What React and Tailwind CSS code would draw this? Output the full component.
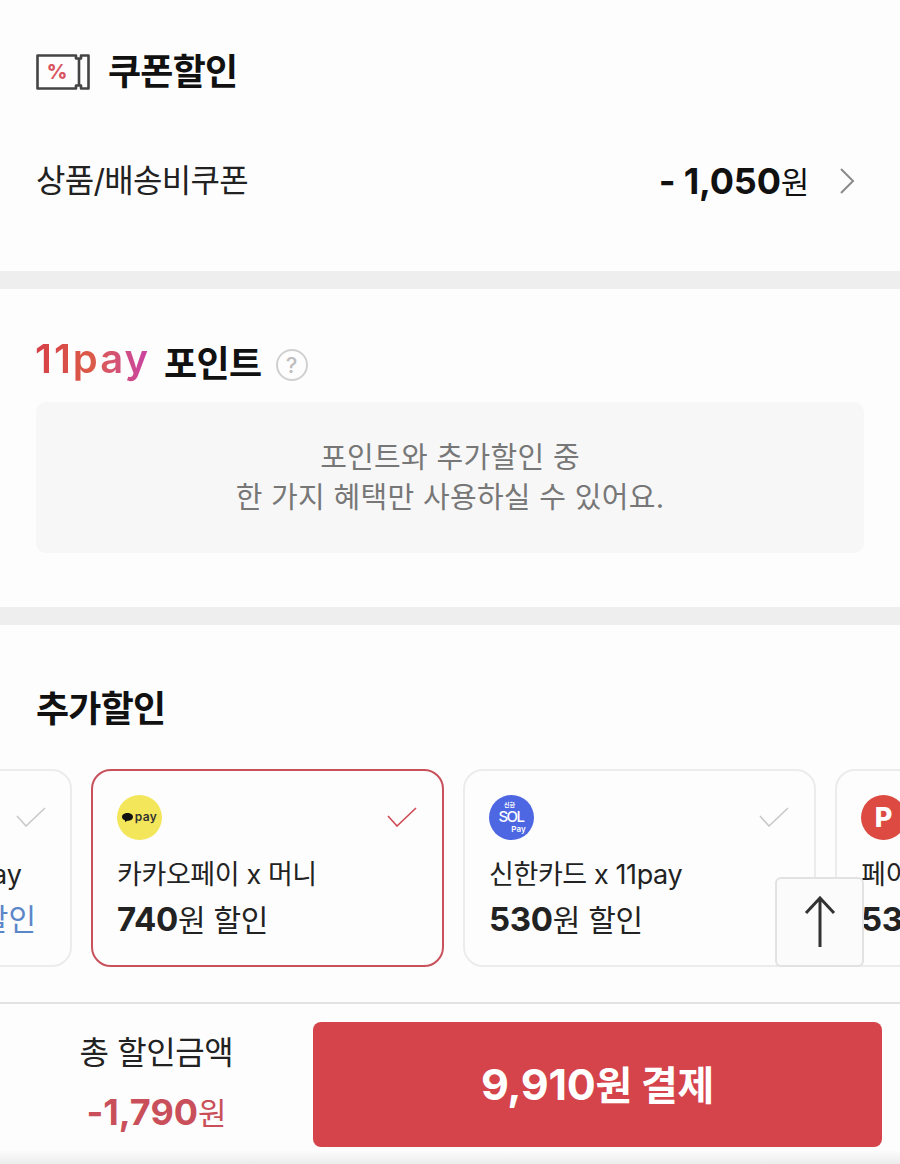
import React from 'react';

const FONT = 'font-["Inter","Noto_Sans_CJK_KR",sans-serif]';

const Check = ({ color }) => (
  <svg width="30" height="20" viewBox="0 0 30 20" fill="none" className="shrink-0">
    <path d="M1 9 L10 19 L29 1" stroke={color} strokeWidth="1.6" />
  </svg>
);

const CouponIcon = () => (
  <svg width="54" height="36" viewBox="0 0 54 36" fill="none" className="shrink-0">
    <path
      d="M1.500 1.500 H40 V4.500 H43 V31.500 H40 V34.500 H1.500 Z M43 4.500 H45 V1.500 H52.500 V34.500 H45 V31.500 H43"
      stroke="#444444"
      strokeWidth="2.600"
      strokeLinejoin="round"
    />
    <text x="21" y="25" textAnchor="middle" fontSize="20" fontWeight="800" fill="#d8555f" fontFamily="Inter, sans-serif">%</text>
  </svg>
);

const KakaoLogo = () => (
  <div className="w-[45px] h-[45px] rounded-full bg-[#f3e65a] flex items-center justify-center gap-[2px] shrink-0">
    <svg width="11" height="9" viewBox="0 0 11 9"><path d="M5.5 0C8.5 0 11 1.7 11 3.9S8.5 7.7 5.5 7.7L3 9V7.2C1.200 6.500 0 5.300 0 3.900 0 1.700 2.500 0 5.500 0Z" fill="#111" /></svg>
    <span className="text-[12px] leading-none font-semibold tracking-[0.3px] text-[#333] pb-[1px]">pay</span>
  </div>
);

const SolLogo = () => (
  <div className="w-[45px] h-[45px] rounded-full bg-[#4d67e3] flex flex-col items-center justify-center text-white shrink-0 leading-none">
    <span className="text-[6px] font-bold mb-[1px] mr-[4px]">신한</span>
    <span className="text-[15px] font-medium tracking-[-1.500px] mr-[1px]">SOL</span>
    <span className="text-[8px] font-semibold ml-[14px] mt-[1px]">Pay</span>
  </div>
);

const PointLogo = () => (
  <div className="w-[45px] h-[45px] rounded-full bg-[#dc4a42] flex items-center justify-center text-white text-[27px] font-extrabold shrink-0 leading-none">
    P
  </div>
);

const DiscountCard = ({ logo, name, amount, selected }) => (
  <div className={`w-[353px] h-[198px] shrink-0 rounded-[20px] border-2 pl-[24px] pr-[25px] pt-[24px] ${selected ? 'border-[#c9515c]' : 'border-[#ececec]'}`}>
    <div className="flex items-start justify-between h-[45px]">
      {logo}
      <div className="pt-[12px]">
        <Check color={selected ? '#cf4a55' : '#c9c9c9'} />
      </div>
    </div>
    <div className="mt-[13px] text-[27px] leading-[44px] tracking-[-0.4px] text-[#222]">{name}</div>
    <div className="text-[30px] leading-[45px] text-[#222] tracking-[-0.3px]">
      <span className="font-bold text-[33px]">{amount}</span>원 할인
    </div>
  </div>
);

export default function App() {
  return (
    <div className={`w-[900px] h-[1164px] overflow-hidden bg-[#fdfdfd] ${FONT}`}>
      {/* 쿠폰할인 */}
      <section className="h-[271px] px-[36px] pt-[47px]">
        <div className="flex items-center gap-[18px] h-[50px]">
          <CouponIcon />
          <h2 className="text-[36px] leading-[50px] font-bold text-[#111] tracking-[-0.8px]">쿠폰할인</h2>
        </div>
        <div className="flex items-center justify-between h-[50px] mt-[59px]">
          <span className="text-[32px] text-[#222] tracking-[-0.7px]">상품/배송비쿠폰</span>
          <div className="flex items-center">
            <span className="text-[31px] text-[#111] tracking-[-0.3px]">
              <span className="font-bold text-[36px] tracking-[-0.2px]">- 1,050</span>원
            </span>
            <svg width="16" height="26" viewBox="0 0 16 26" fill="none" className="ml-[30px] mr-[9px]">
              <path d="M2 1 L14 13 L2 25" stroke="#8a8a8a" strokeWidth="2" />
            </svg>
          </div>
        </div>
      </section>

      <div className="h-[18px] bg-[#eeeeee]" />

      {/* 11pay 포인트 */}
      <section className="h-[318px] px-[36px] pt-[48px]">
        <div className="flex items-center h-[54px] -ml-[1px]">
          <span className="pb-[10px] text-[40px] leading-[54px] font-semibold tracking-[2px] bg-gradient-to-r from-[#d63f48] via-[#dc5a48] to-[#c93fa5] bg-clip-text text-transparent">11pay</span>
          <span className="ml-[14px] text-[36px] leading-[54px] font-bold text-[#111] tracking-[-0.6px]">포인트</span>
          <span className="ml-[14px] mt-[2px] w-[32px] h-[32px] rounded-full border-2 border-[#d0d0d0] flex items-center justify-center text-[22px] font-medium text-[#bdbdbd]">?</span>
        </div>
        <div className="mt-[11px] h-[151px] rounded-[10px] bg-[#f7f7f7] flex flex-col items-center justify-center text-[29px] leading-[40px] text-[#777777] tracking-[0.3px]">
          <p>포인트와 추가할인 중</p>
          <p>한 가지 혜택만 사용하실 수 있어요.</p>
        </div>
      </section>

      <div className="h-[18px] bg-[#eeeeee]" />

      {/* 추가할인 */}
      <section className="relative h-[377px] pt-[60px]">
        <h2 className="px-[36px] text-[36px] leading-[48px] font-bold text-[#111] tracking-[-0.8px]">추가할인</h2>
        <div className="mt-[36px] overflow-hidden">
          <div className="flex gap-[19px] -ml-[281px]">
            <div className="w-[353px] h-[198px] shrink-0 rounded-[20px] border-2 border-[#ececec] pt-[24px]">
              <div className="flex justify-end pr-[24px] h-[45px] pt-[12px]">
                <Check color="#c9c9c9" />
              </div>
              <div className="mt-[13px] text-right pr-[48px] text-[27px] leading-[44px] text-[#222]">11pay</div>
              <div className="text-right pr-[34px] text-[30px] leading-[45px] text-[#5b86c8]">할인</div>
            </div>
            <DiscountCard logo={<KakaoLogo />} name="카카오페이 x 머니" amount="740" selected />
            <DiscountCard logo={<SolLogo />} name="신한카드 x 11pay" amount="530" />
            <DiscountCard logo={<PointLogo />} name="페이코 x 포인트" amount="530" />
          </div>
        </div>
        <button className="absolute left-[775px] top-[252px] w-[89px] h-[90px] rounded-[6px] border-2 border-[#e2e2e2] bg-[#fbfbfb] flex items-center justify-center">
          <svg width="32" height="52" viewBox="0 0 32 52" fill="none">
            <path d="M16 51 V2 M2 17 L16 2 L30 17" stroke="#333333" strokeWidth="3" />
          </svg>
        </button>
      </section>

      {/* 하단 결제 */}
      <footer className="h-[148px] border-t-2 border-[#e2e2e2] flex pt-[18px] pr-[18px]">
        <div className="w-[313px] shrink-0 flex flex-col items-center pt-[7px]">
          <span className="text-[32px] leading-[48px] text-[#222] tracking-[-0.4px]">총 할인금액</span>
          <span className="mt-[11px] text-[31px] leading-[48px] text-[#c9505a]">
            <span className="font-bold text-[36px] tracking-[0px]">-1,790</span>원
          </span>
        </div>
        <button className="flex-1 h-[125px] rounded-[8px] bg-[#d5444b] text-white text-[40px] font-bold tracking-[-0.3px]">
          <span className="text-[43px]">9,910</span>원 결제
        </button>
      </footer>
      <div className="h-[14px] bg-gradient-to-b from-[#fdfdfd] to-[#ececec]" />
    </div>
  );
}
